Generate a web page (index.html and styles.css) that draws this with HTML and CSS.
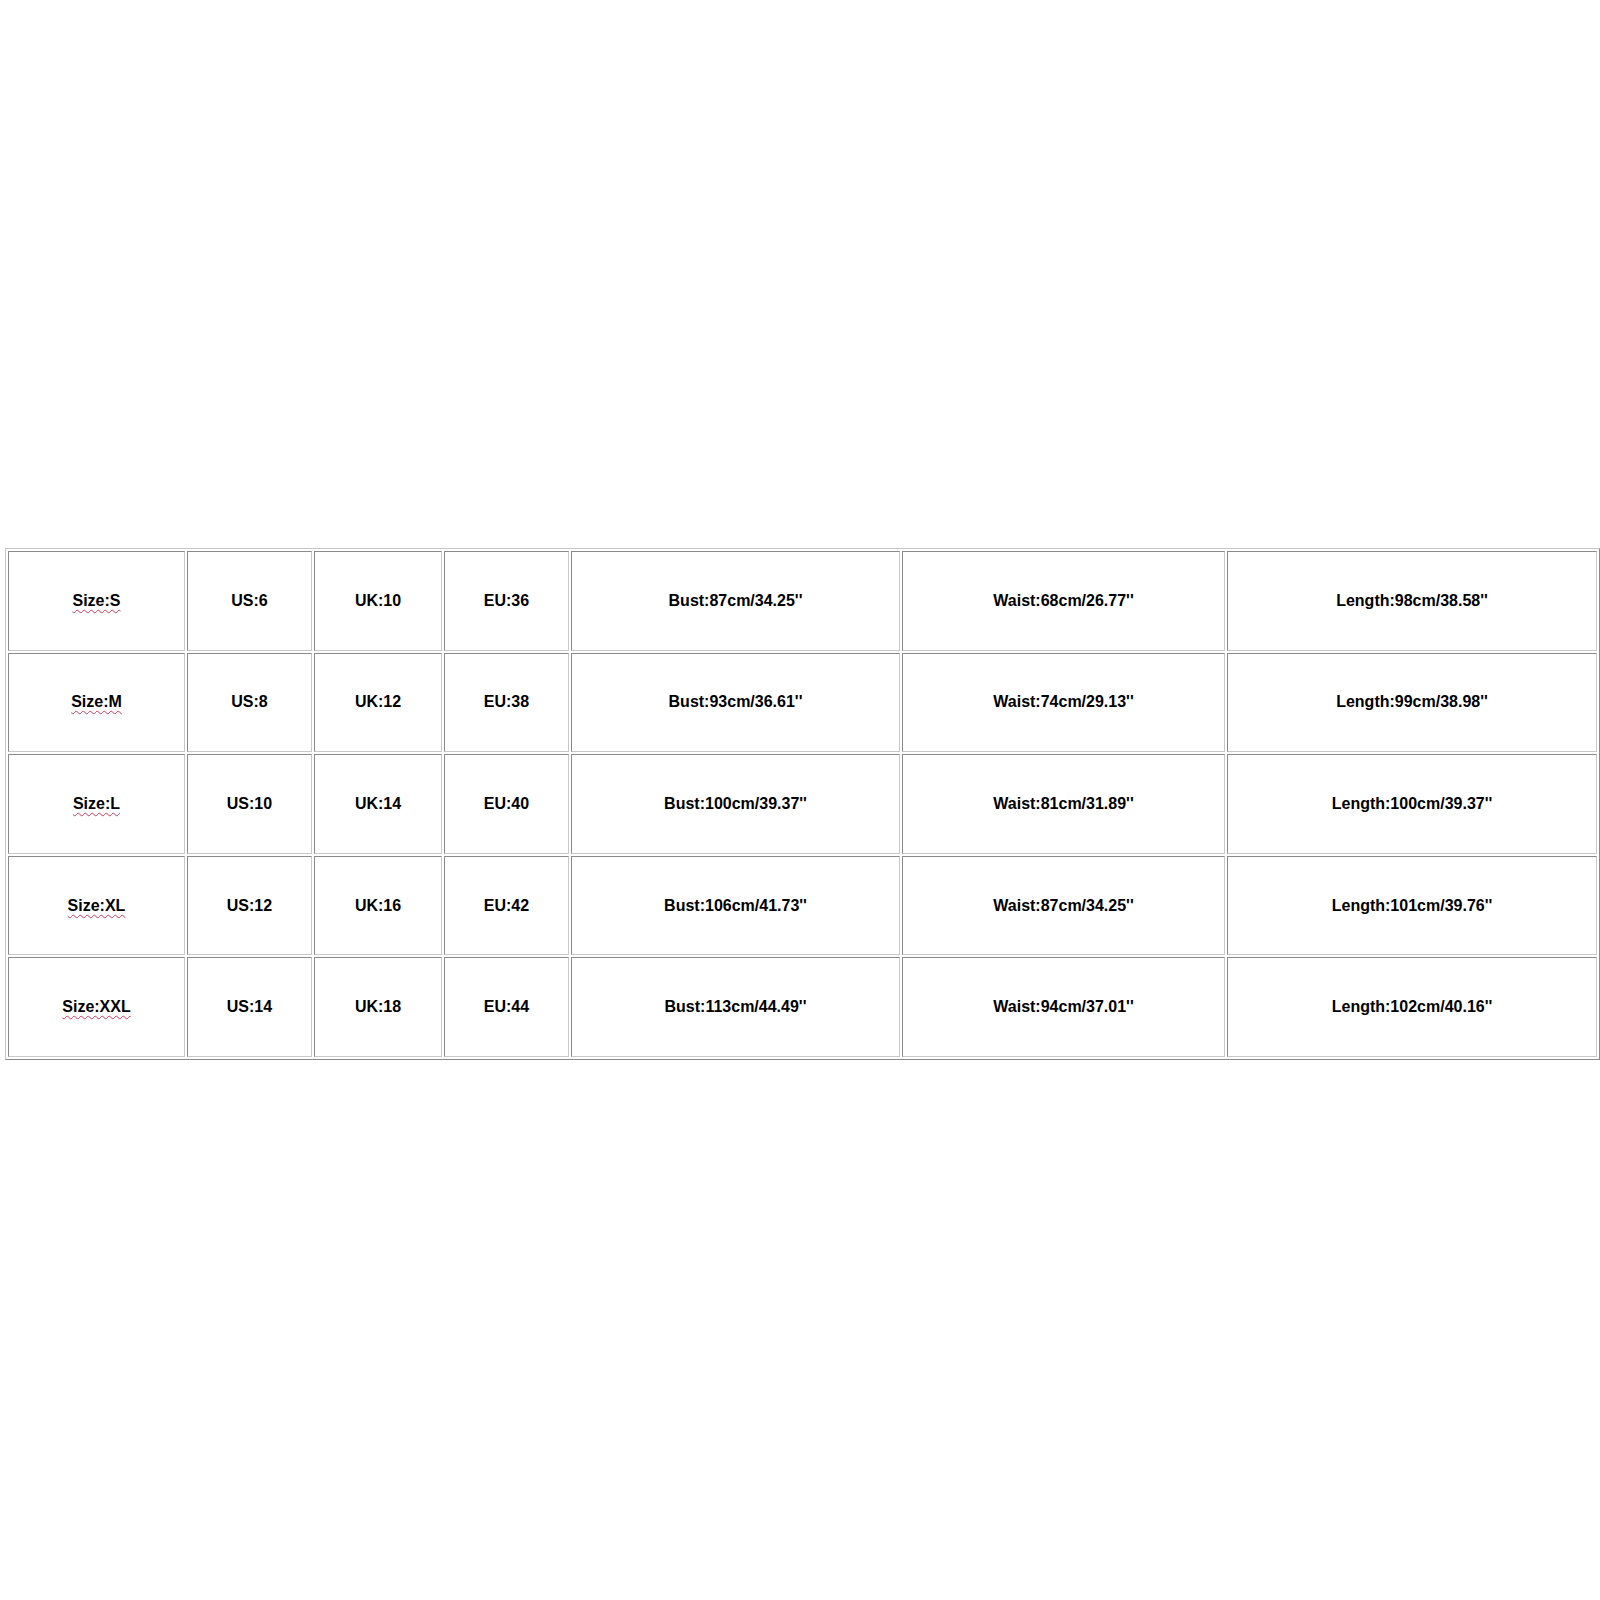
FILE: index.html
```html
<!DOCTYPE html>
<html>
<head>
<meta charset="utf-8">
<title>Size Chart</title>
<link rel="stylesheet" href="styles.css">
</head>
<body>
<div class="page">
  <table class="chart">
    <colgroup>
      <col class="c1"><col class="c2"><col class="c3"><col class="c4"><col class="c5"><col class="c6"><col class="c7">
    </colgroup>
    <tbody>
      <tr><td><span class="spell">Size:S</span></td><td>US:6</td><td>UK:10</td><td>EU:36</td><td>Bust:87cm/34.25''</td><td>Waist:68cm/26.77''</td><td>Length:98cm/38.58''</td></tr>
      <tr><td><span class="spell">Size:M</span></td><td>US:8</td><td>UK:12</td><td>EU:38</td><td>Bust:93cm/36.61''</td><td>Waist:74cm/29.13''</td><td>Length:99cm/38.98''</td></tr>
      <tr><td><span class="spell">Size:L</span></td><td>US:10</td><td>UK:14</td><td>EU:40</td><td>Bust:100cm/39.37''</td><td>Waist:81cm/31.89''</td><td>Length:100cm/39.37''</td></tr>
      <tr><td><span class="spell">Size:XL</span></td><td>US:12</td><td>UK:16</td><td>EU:42</td><td>Bust:106cm/41.73''</td><td>Waist:87cm/34.25''</td><td>Length:101cm/39.76''</td></tr>
      <tr><td><span class="spell">Size:XXL</span></td><td>US:14</td><td>UK:18</td><td>EU:44</td><td>Bust:113cm/44.49''</td><td>Waist:94cm/37.01''</td><td>Length:102cm/40.16''</td></tr>
    </tbody>
  </table>
</div>
</body>
</html>
```
FILE: styles.css
```css
html, body {
  margin: 0;
  padding: 0;
  background: #ffffff;
}
.page {
  padding: 548px 0 0 5px;
}
.chart {
  border-collapse: separate;
  border-spacing: 2px;
  table-layout: fixed;
  width: 1595px;
  border-style: solid;
  border-width: 1px;
  border-color: #c4c4c4 #8a8a8a #8a8a8a #c4c4c4;
  font-family: "Liberation Sans", Arial, sans-serif;
  font-weight: bold;
  font-size: 16px;
  color: #000000;
}
.c1 { width: 177px; }
.c2 { width: 125px; }
.c3 { width: 128px; }
.c4 { width: 125px; }
.c5 { width: 329px; }
.c6 { width: 323px; }
.c7 { width: 370px; }
.chart td {
  padding: 0;
  text-align: center;
  vertical-align: middle;
  border-style: solid;
  border-width: 1px;
  border-color: #8a8a8a #c8c8c8 #c8c8c8 #8a8a8a;
  box-sizing: border-box;
  height: 99.6px;
}
.spell {
  text-decoration-line: underline;
  text-decoration-style: wavy;
  text-decoration-color: #d03a5a;
  text-decoration-thickness: 1px;
  text-underline-offset: 3px;
}
```
